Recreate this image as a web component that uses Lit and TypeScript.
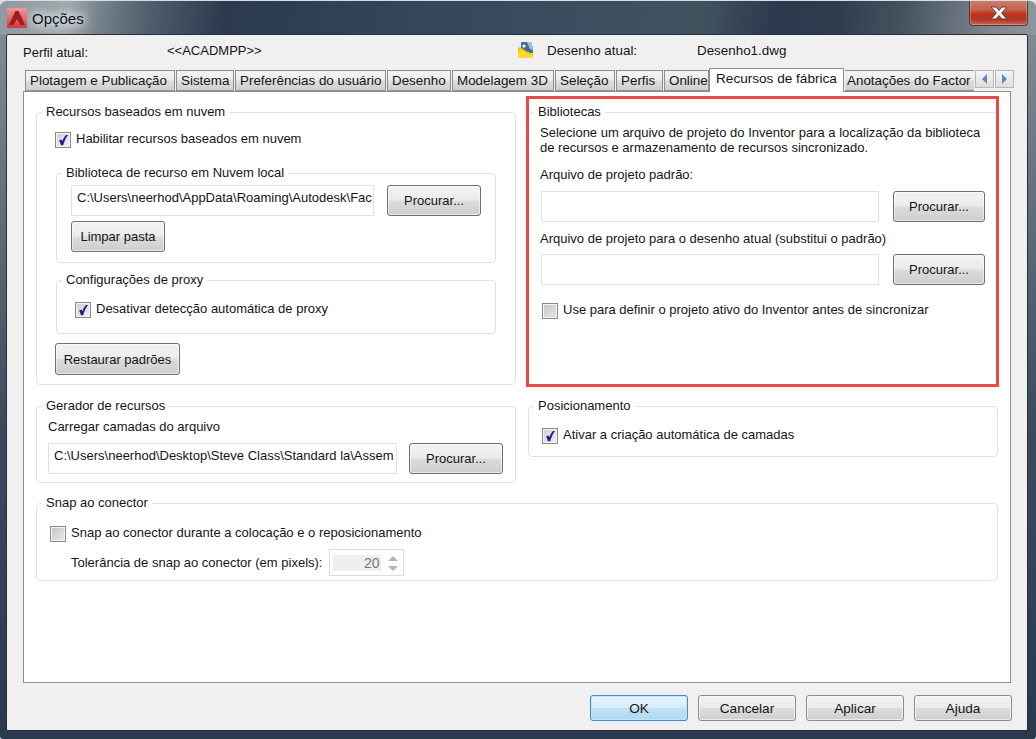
import { LitElement, html, css, svg } from "lit";
import { customElement } from "lit/decorators.js";

const TABS: [string, number][] = [
  ["Plotagem e Publicação", 150],
  ["Sistema", 58],
  ["Preferências do usuário", 151],
  ["Desenho", 64],
  ["Modelagem 3D", 102],
  ["Seleção", 60],
  ["Perfis", 47],
  ["Online", 45],
];

const check = svg`<svg class="tick" viewBox="0 0 16 16" width="16" height="16"><path d="M4 8.4 L6.6 7.4 L7.3 9.2 C8.2 6.8 9.5 4.6 11 3 L13 3 C10.8 6 9.2 9.4 8.2 13.2 L5.9 13.2 C5.5 11.2 4.9 9.8 4 8.4 Z" fill="#20208a"/></svg>`;

@customElement("app-root")
export class AppRoot extends LitElement {
  static styles = css`
    :host { display: block; width: 1036px; height: 739px; background: #dfe3e6; font-family: "Liberation Sans", Arial, sans-serif; font-size: 13px; color: #151515; }
    * { box-sizing: border-box; }
    .win { width: 1036px; height: 739px; border-radius: 7px 7px 3px 3px; padding: 0 8px 8px 6px; display: flex; flex-direction: column; overflow: hidden;
      border-top: 1px solid #d8dde0;
      background: linear-gradient(97deg, #8f99a1 0, #a2a9af 70px, #76828c 100px, #4f5e6c 150px, #2b3a4e 225px, #33455a 400px, #3b4e60 560px, #41525f 700px, #2b3a4e 770px, #2d3b4d 830px, #465461 900px, #7f8890 990px, #8f979d 1036px) top/100% 34px no-repeat,
        linear-gradient(180deg, #7f8a93 34px, #3c4b5c 420px, #2a3a4e 739px); }
    .title { height: 33px; flex: none; display: flex; align-items: flex-start; }
    .logo { margin: 7px 0 0 1px; width: 20px; height: 20px; flex: none; display: block; }
    .name { margin: 9px 0 0 5px; font-size: 15px; line-height: 18px; color: #0d1520; text-shadow: 0 0 8px #e6ecef, 0 0 8px #e6ecef, 0 0 12px #e6ecef; }
    .close { margin: -1px 0 0 auto; width: 59px; height: 26px; border: 1px solid #4a3a38; border-top: none; border-radius: 0 0 4px 4px; display: flex; align-items: center; justify-content: center;
      background: linear-gradient(180deg, #cf7e70 0, #c4604c 40%, #c0321c 55%, #b23a26 80%, #c46a58 100%); box-shadow: inset 0 0 0 1px rgba(255,255,255,.25); }
    .client { width: 1022px; height: 697px; flex: none; background: #f0f0f0; border: 1px solid #2a2f36; border-radius: 2px; padding: 0 16px; display: flex; flex-direction: column; }
    .head { height: 33px; flex: none; display: flex; align-items: flex-start; padding-top: 8px; line-height: 15px; }
    .h1 { width: 144px; padding-top: 2px; }
    .h2 { width: 351px; }
    .h3 { width: 29px; height: 18px; margin-top: -2px; display: block; }
    .h4 { width: 150px; font-size: 13.4px; }
    .h5 { font-size: 13.4px; }
    .tabs { height: 23px; flex: none; display: flex; align-items: flex-end; gap: 1px; padding-left: 2px; position: relative; z-index: 1; font-size: 13.4px; }
    .tab { height: 21px; flex: none; border: 1px solid #8e8e8e; padding: 2px 0 0 4px; line-height: 15px; white-space: nowrap; overflow: hidden; background: linear-gradient(180deg, #f4f4f4 0, #ececec 45%, #dcdcdc 55%, #cfcfcf 100%); }
    .tab.on { width: 135px; height: 24px; margin: 0 0 -1px -1px; background: #fff; border-bottom: none; padding: 2px 0 0 6px; position: relative; font-size: 13.6px; }
    .tab.last { width: 129px; border-left: none; border-right: none; padding-left: 2px; margin-left: 0; }
    .arrows { display: flex; gap: 1px; align-self: flex-start; margin: 2px 0 0 0; background: #fff; padding: 0; }
    .arr { width: 19px; height: 18px; border: 1px solid #b8b8b8; background: linear-gradient(180deg, #f6f6f6, #dedede); display: flex; align-items: center; justify-content: center; }
    .panel { width: 988px; height: 592px; flex: none; background: #fff; border: 1px solid #8e8e8e; padding: 20px 12px 0; }
    .cols { display: flex; gap: 12px; }
    .col { display: flex; flex-direction: column; gap: 21px; }
    .l { width: 480px; }
    .r { width: 470px; }
    .group { border: 1px solid #dbe3ea; border-radius: 4px; position: relative; }
    .legend { position: absolute; top: -8px; left: 5px; background: #fff; padding: 0 4px; line-height: 14px; white-space: nowrap; }
    .g-cloud { height: 273px; padding: 19px 0 0 18px; }
    .g-lib { width: 440px; height: 90px; margin: 25px 0 0 1px; padding: 11px 0 0 14px; }
    .g-proxy { width: 440px; height: 54px; margin: 17px 0 0 1px; padding: 21px 0 0 18px; }
    .g-gen { height: 77px; padding: 12px 0 0 11px; }
    .g-bib { height: 273px; padding: 12px 11px 0 11px; }
    .g-pos { height: 51px; padding: 21px 0 0 13px; }
    .g-snap { width: 962px; height: 78px; margin-top: 20px; padding: 22px 0 0 13px; }
    .red { position: absolute; left: -3px; right: -2px; top: -17px; bottom: -3px; border: 3px solid #ea4a45; pointer-events: none; z-index: 2; }
    .row { display: flex; align-items: flex-start; }
    .chk { display: flex; align-items: flex-start; gap: 5px; line-height: 14px; white-space: nowrap; }
    .box { width: 16px; height: 16px; flex: none; border: 1px solid #8a8a8a; background: linear-gradient(135deg, #cfcfd6, #f0f0f4); box-shadow: inset 0 0 0 1px #f4f4f4; position: relative; }
    .box.off { background: linear-gradient(135deg, #c4c4c4, #e8e8e8); }
    .tick { position: absolute; left: -1px; top: -1px; display: block; }
    .input { height: 31px; flex: none; border: 1px solid #dbe3ea; background: #fff; line-height: 24px; padding: 0 0 0 5px; overflow: hidden; white-space: nowrap; border-radius: 1px; }
    .btn { flex: none; height: 31px; border: 1px solid #6f6f6f; border-radius: 3px; display: flex; align-items: center; justify-content: center; line-height: 15px; white-space: nowrap;
      background: linear-gradient(180deg, #f3f3f3 0, #ebebeb 48%, #dcdcdc 52%, #cdcdcd 100%); box-shadow: inset 0 0 0 1px rgba(255,255,255,.55); }
    .b94 { width: 94px; }
    .b92 { width: 92px; }
    .rest { width: 125px; height: 32px; margin: 9px 0 0 0; }
    .lab { line-height: 15px; white-space: nowrap; }
    .gap13 { gap: 13px; }
    .gap12 { gap: 12px; }
    .gap14 { gap: 14px; margin-left: 1px; }
    .mt5 { margin-top: 5px; }
    .para { line-height: 15px; white-space: nowrap; }
    .m12 { margin-top: 12px; }
    .m9 { margin-top: 9px; }
    .m8 { margin-top: 8px; }
    .m18 { margin: 18px 0 0 2px; }
    .spinrow { display: flex; align-items: center; gap: 7px; margin: 7px 0 0 21px; }
    .spin { width: 75px; height: 27px; border: 1px solid #d6dde4; padding: 5px 3px; display: flex; gap: 5px; }
    .spin b { width: 48px; height: 16px; font-weight: normal; background: #efefef; color: #777; text-align: right; padding-right: 2px; line-height: 16px; font-size: 14px; }
    .foot { display: flex; justify-content: flex-end; gap: 10px; margin: 12px -1px 0 0; font-size: 13.6px; }
    .fb { width: 98px; height: 26px; flex: none; border: 1px solid #8b8b8b; border-radius: 3px; display: flex; align-items: center; justify-content: center; line-height: 15px;
      background: linear-gradient(180deg, #f3f3f3 0, #ebebeb 48%, #dcdcdc 52%, #cfcfcf 100%); box-shadow: inset 0 0 0 1px rgba(255,255,255,.6); }
    .fb.ok { border-color: #3c8fc6; background: linear-gradient(180deg, #e8f5fc 0, #d6edfa 48%, #bfe2f6 52%, #b0d9f2 100%); box-shadow: inset 0 0 0 1px #bfe6fa; }
  `;

  private cb(label: string, on: boolean) {
    return html`<div class="chk"><span class="box ${on ? "" : "off"}">${on ? check : ""}</span><span>${label}</span></div>`;
  }

  render() {
    return html`
      <div class="win">
        <div class="title">
          <svg class="logo" viewBox="0 0 20 20">
            <defs><linearGradient id="lg" x1="0" y1="0" x2="0" y2="1"><stop offset="0" stop-color="#ee9a98"/><stop offset="1" stop-color="#cf3a3c"/></linearGradient></defs>
            <rect width="20" height="20" fill="url(#lg)"/>
            <path d="M8.4 3 L11.6 3 L18 17 L13.6 17 L10 11 L6.4 17 L2 17 Z" fill="#a01a1e"/>
          </svg>
          <span class="name">Opções</span>
          <div class="close">
            <svg width="20" height="14" viewBox="0 0 20 14"><path d="M2 1 H7 L10 4.4 L13 1 H18 L12.6 7 L18 13 H13 L10 9.6 L7 13 H2 L7.4 7 Z" fill="#f2f2f2" stroke="#55433f" stroke-width="1"/></svg>
          </div>
        </div>
        <div class="client">
          <div class="head">
            <span class="h1">Perfil atual:</span>
            <span class="h2">&lt;&lt;ACADMPP&gt;&gt;</span>
            <svg class="h3" viewBox="0 0 29 18" preserveAspectRatio="xMinYMin">
              <path d="M3 1 H13 L15 8 L15 12 H3 Z" fill="#3f6f9e"/>
              <path d="M9 1 H13 L15 9 L12 8 Z" fill="#a8c0d6"/>
              <circle cx="6" cy="5" r="1.6" fill="#fff"/>
              <path d="M0 7 L2 6 L8 10 L15 13 V17 H0 Z" fill="#f4c400"/>
              <path d="M0 17 H15 V15 L3 9 L0 11 Z" fill="#ffd92e"/>
            </svg>
            <span class="h4">Desenho atual:</span>
            <span class="h5">Desenho1.dwg</span>
          </div>
          <div class="tabs">
            ${TABS.map(([t, w]) => html`<div class="tab" style="width:${w}px">${t}</div>`)}
            <div class="tab on">Recursos de fábrica</div>
            <div class="tab last">Anotações do Factor</div>
            <div class="arrows">
              <div class="arr"><svg width="7" height="10" viewBox="0 0 7 10"><path d="M6 0 V10 L1 5 Z" fill="#5f86c0"/></svg></div>
              <div class="arr"><svg width="7" height="10" viewBox="0 0 7 10"><path d="M1 0 V10 L6 5 Z" fill="#5f86c0"/></svg></div>
            </div>
          </div>
          <div class="panel">
            <div class="cols">
              <div class="col l">
                <div class="group g-cloud">
                  <span class="legend">Recursos baseados em nuvem</span>
                  ${this.cb("Habilitar recursos baseados em nuvem", true)}
                  <div class="group g-lib">
                    <span class="legend">Biblioteca de recurso em Nuvem local</span>
                    <div class="row gap13">
                      <div class="input" style="width:303px">C:\\Users\\neerhod\\AppData\\Roaming\\Autodesk\\Fac</div>
                      <div class="btn b94">Procurar...</div>
                    </div>
                    <div class="btn b94 mt5">Limpar pasta</div>
                  </div>
                  <div class="group g-proxy">
                    <span class="legend">Configurações de proxy</span>
                    ${this.cb("Desativar detecção automática de proxy", true)}
                  </div>
                  <div class="btn rest">Restaurar padrões</div>
                </div>
                <div class="group g-gen">
                  <span class="legend">Gerador de recursos</span>
                  <div class="lab">Carregar camadas do arquivo</div>
                  <div class="row gap12 m9">
                    <div class="input" style="width:349px">C:\\Users\\neerhod\\Desktop\\Steve Class\\Standard la\\Assem</div>
                    <div class="btn b94">Procurar...</div>
                  </div>
                </div>
              </div>
              <div class="col r">
                <div class="group g-bib">
                  <span class="legend">Bibliotecas</span>
                  <div class="red"></div>
                  <div class="para">Selecione um arquivo de projeto do Inventor para a localização da biblioteca<br />de recursos e armazenamento de recursos sincronizado.</div>
                  <div class="lab m12">Arquivo de projeto padrão:</div>
                  <div class="row gap14 m9">
                    <div class="input" style="width:338px"></div>
                    <div class="btn b92">Procurar...</div>
                  </div>
                  <div class="lab m9">Arquivo de projeto para o desenho atual (substitui o padrão)</div>
                  <div class="row gap14 m8">
                    <div class="input" style="width:338px"></div>
                    <div class="btn b92">Procurar...</div>
                  </div>
                  <div class="m18">${this.cb("Use para definir o projeto ativo do Inventor antes de sincronizar", false)}</div>
                </div>
                <div class="group g-pos">
                  <span class="legend">Posicionamento</span>
                  ${this.cb("Ativar a criação automática de camadas", true)}
                </div>
              </div>
            </div>
            <div class="group g-snap">
              <span class="legend">Snap ao conector</span>
              ${this.cb("Snap ao conector durante a colocação e o reposicionamento", false)}
              <div class="spinrow">
                <span>Tolerância de snap ao conector (em pixels):</span>
                <div class="spin">
                  <b>20</b>
                  <svg width="14" height="18" viewBox="0 0 14 18"><path d="M7 1 L12 6 H2 Z M2 11 H12 L7 16 Z" fill="#b4b4b4"/></svg>
                </div>
              </div>
            </div>
          </div>
          <div class="foot">
            <div class="fb ok">OK</div>
            <div class="fb">Cancelar</div>
            <div class="fb">Aplicar</div>
            <div class="fb">Ajuda</div>
          </div>
        </div>
      </div>
    `;
  }
}
